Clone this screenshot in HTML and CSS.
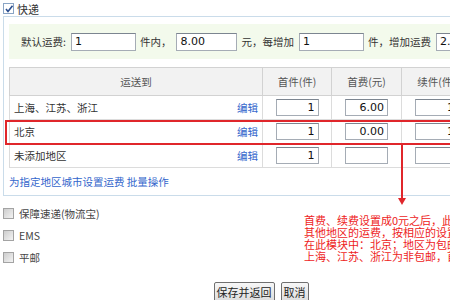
FILE: index.html
```html
<!DOCTYPE html>
<html lang="zh-CN">
<head>
    <meta charset="UTF-8">
    <title>运费模板</title>
    <link rel="stylesheet" href="styles.css">
</head>
<body>
<div class="page">
    <label class="ship-type">
        <span class="cb checked"><svg width="10" height="10" viewBox="0 0 10 10"><path d="M2 5 L4 7.5 L8.5 1.8" fill="none" stroke="#2c4f8f" stroke-width="1.6"/></svg></span>快递
    </label>

    <div class="panel">
        <div class="default-fee">
            <span>默认运费:</span>
            <input class="ipt w64" value="1" readonly>
            <span>件内，</span>
            <input class="ipt w60" value="8.00" readonly>
            <span>元，每增加</span>
            <input class="ipt w64" value="1" readonly>
            <span>件，增加运费</span>
            <input class="ipt w60" value="2.00" readonly>
        </div>

        <table class="area-table">
            <colgroup>
                <col style="width:253px">
                <col style="width:69px">
                <col style="width:70px">
                <col style="width:70px">
                <col style="width:70px">
            </colgroup>
            <thead>
                <tr>
                    <th>运送到</th>
                    <th>首件(件)</th>
                    <th>首费(元)</th>
                    <th>续件(件)</th>
                    <th>续费(元)</th>
                </tr>
            </thead>
            <tbody>
                <tr>
                    <td class="area"><span>上海、江苏、浙江</span><a href="#">编辑</a></td>
                    <td><input class="cell-ipt" value="1" readonly></td>
                    <td><input class="cell-ipt" value="6.00" readonly></td>
                    <td><input class="cell-ipt" value="1" readonly></td>
                    <td><input class="cell-ipt" value="2.00" readonly></td>
                </tr>
                <tr>
                    <td class="area"><span>北京</span><a href="#">编辑</a></td>
                    <td><input class="cell-ipt" value="1" readonly></td>
                    <td><input class="cell-ipt" value="0.00" readonly></td>
                    <td><input class="cell-ipt" value="1" readonly></td>
                    <td><input class="cell-ipt" value="0.00" readonly></td>
                </tr>
                <tr>
                    <td class="area"><span>未添加地区</span><a href="#">编辑</a></td>
                    <td><input class="cell-ipt" value="1" readonly></td>
                    <td><input class="cell-ipt" value="" readonly></td>
                    <td><input class="cell-ipt" value="" readonly></td>
                    <td><input class="cell-ipt" value="" readonly></td>
                </tr>
            </tbody>
        </table>

        <div class="batch"><a href="#">为指定地区城市设置运费</a> <a href="#">批量操作</a></div>
    </div>

    <ul class="other-types">
        <li><span class="cb"></span>保障速递(物流宝)</li>
        <li><span class="cb"></span>EMS</li>
        <li><span class="cb"></span>平邮</li>
    </ul>

    <div class="actions">
        <button class="btn">保存并返回</button>
        <button class="btn">取消</button>
    </div>

    <!-- 标注 -->
    <div class="mark-box"></div>
    <div class="mark-arrow"></div>
    <p class="mark-note">首费、续费设置成0元之后，此商品在该地区包邮，<br>其他地区的运费，按相应的设置计算。<br>在此模块中：北京；地区为包邮，<br>上海、江苏、浙江为非包邮，首件6元。</p>
</div>
</body>
</html>
```

FILE: styles.css
```css
html, body {
    margin: 0;
    overflow: hidden;
    background: #fff;
}
body {
    font-family: "Noto Sans CJK SC", "DejaVu Sans", sans-serif;
    font-size: 10.5px;
    color: #333;
}
.page {
    position: relative;
    width: 560px;
    padding: 1px 0 0 3px;
}
a {
    color: #3366cc;
    text-decoration: none;
}

/* checkbox */
.cb {
    display: inline-block;
    box-sizing: border-box;
    width: 11px;
    height: 11px;
    border: 1px solid #a3a3a3;
    background: linear-gradient(135deg, #cdcdcd, #f3f3f3);
}
.cb.checked {
    border-color: #8aa4c4;
    background: #fff;
}
.cb.checked svg {
    display: block;
}

.ship-type {
    display: flex;
    align-items: center;
    gap: 3px;
    height: 15px;
    font-size: 11px;
}

/* panel */
.panel {
    width: 545px;
    border: 1px solid #cadcea;
    padding: 7px 5px 0;
}
.default-fee {
    display: flex;
    align-items: center;
    height: 35px;
    padding-left: 12px;
    background: #f3faec;
    white-space: nowrap;
}
.ipt {
    box-sizing: border-box;
    height: 18px;
    margin: 0 4px 0 5px;
    padding: 0 3px;
    border: 1px solid #a5acb5;
    border-top-color: #7c8590;
    font-family: "DejaVu Sans", sans-serif;
    font-size: 11px;
    color: #111;
    background: #fff;
}
.w64 { width: 65px; }
.w60 { width: 61px; }

.area-table {
    margin-top: 8px;
    border-collapse: collapse;
    table-layout: fixed;
    width: 532px;
    border: 1px solid #cfcfcf;
}
.area-table th,
.area-table td {
    border: 1px solid #dcdcdc;
    padding: 0 4px;
    text-align: center;
}
.area-table th {
    height: 27px;
    background: #f2f2f2;
    font-weight: normal;
    color: #555;
    border-color: #d2d2d2;
}
.area-table td {
    height: 23px;
}
.area-table td.area {
    text-align: left;
    color: #333;
}
.area a {
    float: right;
}
.cell-ipt {
    box-sizing: border-box;
    width: 43px;
    height: 17px;
    padding: 0 3px;
    vertical-align: middle;
    border: 1px solid #a5acb5;
    border-top-color: #7c8590;
    text-align: right;
    font-family: "DejaVu Sans", sans-serif;
    font-size: 11px;
    color: #111;
}

.batch {
    padding: 6px 0 5px;
    line-height: 16px;
}

.other-types {
    list-style: none;
    margin: 6px 0 0;
    padding: 0;
}
.other-types li {
    display: flex;
    align-items: center;
    gap: 5px;
    height: 22px;
    color: #444;
}

.actions {
    display: flex;
    justify-content: center;
    gap: 6px;
    width: 516px;
    margin-top: 14px;
}
.btn {
    height: 20px;
    padding: 0 2px;
    border: 1px solid #707070;
    border-radius: 2px;
    background: linear-gradient(#f7f7f7, #dddddd);
    font-family: "Noto Sans CJK SC", sans-serif;
    font-size: 11px;
    color: #222;
}

/* annotations */
.mark-box {
    position: absolute;
    left: 5px;
    top: 120px;
    width: 600px;
    height: 25px;
    box-sizing: border-box;
    border: 2px solid #e0262b;
}
.mark-arrow {
    position: absolute;
    left: 401px;
    top: 145px;
    width: 1.5px;
    height: 53px;
    background: #e0262b;
}
.mark-arrow::after {
    content: "";
    position: absolute;
    left: -3.5px;
    bottom: -7px;
    border-left: 4px solid transparent;
    border-right: 4px solid transparent;
    border-top: 7px solid #e0262b;
}
.mark-note {
    position: absolute;
    left: 304px;
    top: 214px;
    margin: 0;
    font-size: 11px;
    line-height: 12px;
    color: #ee1c1c;
    white-space: nowrap;
}
```
